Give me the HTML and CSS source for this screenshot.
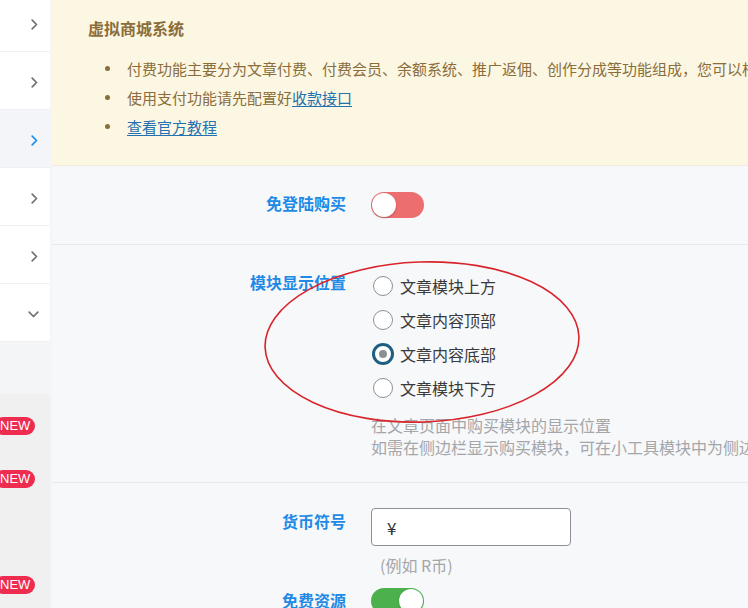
FILE: index.html
```html
<!DOCTYPE html>
<html lang="zh-CN">
<head>
<meta charset="utf-8">
<title>虚拟商城系统</title>
<link rel="stylesheet" href="styles.css">
</head>
<body>
<div class="page">
  <aside class="side">
    <nav class="menu">
      <div class="menu-item"><svg class="chev" width="7" height="11" viewBox="0 0 7 11"><path d="M1.2 1.2l4.3 4.3-4.3 4.3"/></svg></div>
      <div class="menu-item"><svg class="chev" width="7" height="11" viewBox="0 0 7 11"><path d="M1.2 1.2l4.3 4.3-4.3 4.3"/></svg></div>
      <div class="menu-item active"><svg class="chev" width="7" height="11" viewBox="0 0 7 11"><path d="M1.2 1.2l4.3 4.3-4.3 4.3"/></svg></div>
      <div class="menu-item"><svg class="chev" width="7" height="11" viewBox="0 0 7 11"><path d="M1.2 1.2l4.3 4.3-4.3 4.3"/></svg></div>
      <div class="menu-item"><svg class="chev" width="7" height="11" viewBox="0 0 7 11"><path d="M1.2 1.2l4.3 4.3-4.3 4.3"/></svg></div>
      <div class="menu-item"><svg class="chev down" width="11" height="7" viewBox="0 0 11 7"><path d="M1.2 1.2l4.3 4.3 4.3-4.3"/></svg></div>
    </nav>
    <div class="subpanel">
      <div class="sub-item"><span class="badge">NEW</span></div>
      <div class="sub-item"><span class="badge">NEW</span></div>
      <div class="sub-item"></div>
      <div class="sub-item"><span class="badge">NEW</span></div>
    </div>
  </aside>

  <main class="main">
    <section class="notice">
      <h3 class="notice-title">虚拟商城系统</h3>
      <ul class="notice-list">
        <li>付费功能主要分为文章付费、付费会员、余额系统、推广返佣、创作分成等功能组成，您可以根据需要开启或关闭相应的功能</li>
        <li>使用支付功能请先配置好<a href="#">收款接口</a></li>
        <li><a href="#">查看官方教程</a></li>
      </ul>
    </section>

    <div class="form">
      <div class="row">
        <div class="label">免登陆购买</div>
        <div class="field">
          <span class="switch off"><span class="knob"></span></span>
        </div>
      </div>

      <div class="row">
        <div class="label">模块显示位置</div>
        <div class="field">
          <div class="radios">
            <label class="radio-opt"><span class="radio"></span>文章模块上方</label>
            <label class="radio-opt"><span class="radio"></span>文章内容顶部</label>
            <label class="radio-opt"><span class="radio checked"></span>文章内容底部</label>
            <label class="radio-opt"><span class="radio"></span>文章模块下方</label>
          </div>
          <div class="desc">
            <div>在文章页面中购买模块的显示位置</div>
            <div>如需在侧边栏显示购买模块，可在小工具模块中为侧边栏添加购买模块</div>
          </div>
        </div>
      </div>

      <div class="row plain">
        <div class="label lbl-input">货币符号</div>
        <div class="field">
          <input class="text-input" type="text" value="¥">
          <div class="hint">(例如 R币)</div>
        </div>
      </div>

      <div class="row plain last">
        <div class="label lbl-switch">免费资源</div>
        <div class="field">
          <span class="switch on"><span class="knob"></span></span>
        </div>
      </div>
    </div>
  </main>

  <svg class="annotation" width="748" height="608" viewBox="0 0 748 608">
    <ellipse cx="422" cy="342" rx="157" ry="80" transform="rotate(-2 422 342)"/>
  </svg>
</div>
</body>
</html>
```

FILE: styles.css
```css
* { box-sizing: border-box; }

html, body {
  margin: 0;
  padding: 0;
}

body {
  width: 748px;
  height: 608px;
  overflow: hidden;
  background: #f4f5f7;
  font-family: "Noto Sans CJK SC", "Noto Sans", "Liberation Sans", sans-serif;
}

.page {
  position: relative;
  display: flex;
  gap: 2px;
  height: 608px;
  overflow: hidden;
}

/* sidebar */
.side {
  width: 50px;
  flex: none;
  display: flex;
  flex-direction: column;
}

.menu {
  background: #fff;
  margin-top: -6px;
}

.menu-item {
  height: 58px;
  border-bottom: 1px solid #eef0f2;
  display: flex;
  align-items: center;
  justify-content: flex-end;
  padding-right: 12px;
  padding-top: 4px;
  color: #6f7277;
}

.menu-item.active {
  background: #f3f5f8;
  color: #1e8fe8;
}

.menu-item:last-child {
  padding-right: 11px;
}

.chev path {
  fill: none;
  stroke: currentColor;
  stroke-width: 1.7;
  stroke-linecap: round;
  stroke-linejoin: round;
}

.subpanel {
  margin-top: 52px;
  flex: 1;
  background: #f0f0f1;
  padding-top: 5px;
}

.sub-item {
  height: 53px;
  display: flex;
  align-items: center;
}

.badge {
  margin-left: -6px;
  height: 18px;
  padding: 0 5px 0 6px;
  border-radius: 9px;
  background: #ee2c50;
  color: #fff;
  font-family: "Liberation Sans", "Noto Sans", sans-serif;
  font-size: 13px;
  line-height: 18px;
}

/* main */
.main {
  flex: 1;
  min-width: 0;
  overflow: hidden;
  background: #f7f8fa;
}

.notice {
  background: #fcf7e3;
  border-bottom: 1px solid #f1ecda;
  padding: 17px 0 24px 36px;
  color: #8a6d3b;
}

.notice-title {
  margin: 0;
  font-size: 16px;
  line-height: 22px;
  font-weight: 700;
}

.notice-list {
  list-style: none;
  margin: 15px 0 0;
  padding: 0 0 0 39px;
  font-size: 15px;
  line-height: 29px;
  white-space: nowrap;
}

.notice-list li {
  position: relative;
}

.notice-list li::before {
  content: "";
  position: absolute;
  left: -22px;
  top: 12px;
  width: 5px;
  height: 5px;
  border-radius: 50%;
  background: #8a6d3b;
}

.notice-list a {
  color: #2271b1;
  text-decoration: underline;
  text-underline-offset: 2px;
}

/* form rows */
.row {
  display: grid;
  grid-template-columns: 294px 1fr;
  column-gap: 25px;
  padding: 26px 0;
  border-bottom: 1px solid #e7e9ec;
}

.row:nth-child(2) {
  padding-bottom: 24px;
}

.row.plain {
  border-bottom: none;
  padding: 25px 0 12px;
}

.row.plain.last {
  padding: 0;
}

.label {
  text-align: right;
  font-size: 16px;
  line-height: 22px;
  font-weight: 700;
  color: #1e8ae6;
  white-space: nowrap;
}

.lbl-input { margin-top: 2px; }
.lbl-switch { margin-top: 1px; }

.field {
  min-width: 0;
}

/* switch */
.switch {
  display: flex;
  align-items: center;
  width: 53px;
  height: 26px;
  border-radius: 13px;
  padding: 0 1px;
}

.switch.off {
  background: #ec6e6e;
  justify-content: flex-start;
}

.switch.on {
  background: #4cb04c;
  justify-content: flex-end;
}

.knob {
  width: 24px;
  height: 24px;
  border-radius: 50%;
  background: #fff;
  box-shadow: 0 1px 2px rgba(0, 0, 0, 0.25);
}

/* radios */
.radios {
  display: flex;
  flex-direction: column;
  gap: 12px;
  padding-top: 4px;
}

.radio-opt {
  display: flex;
  align-items: center;
  height: 22px;
  font-size: 16px;
  line-height: 22px;
  color: #3a3a3a;
}

.radio {
  width: 20px;
  height: 20px;
  margin: 0 7px 0 2px;
  border-radius: 50%;
  border: 1px solid #8c8f94;
  background: #fff;
  display: flex;
  align-items: center;
  justify-content: center;
}

.radio.checked {
  border: 2px solid #1d5f80;
  box-shadow: 0 0 0 1px #1d5f80;
}

.radio.checked::after {
  content: "";
  width: 8px;
  height: 8px;
  border-radius: 50%;
  background: #8c8f94;
}

.desc {
  margin-top: 15px;
  font-size: 16px;
  line-height: 22px;
  color: #a4a6a9;
  white-space: nowrap;
}

/* text input */
.text-input {
  display: block;
  width: 200px;
  height: 38px;
  margin: 0;
  padding: 0 0 0 15px;
  border: 1px solid #8c8f94;
  border-radius: 4px;
  background: #fff;
  font-family: "Noto Sans CJK SC", "Noto Sans", sans-serif;
  font-size: 17px;
  color: #2c3338;
  outline: none;
}

.hint {
  margin-top: 8px;
  padding-left: 9px;
  font-size: 16px;
  line-height: 22px;
  color: #a4a6a9;
}

/* hand-drawn annotation */
.annotation {
  position: absolute;
  left: 0;
  top: 0;
  pointer-events: none;
}

.annotation ellipse {
  fill: none;
  stroke: #d9242b;
  stroke-width: 1.6;
}
```
